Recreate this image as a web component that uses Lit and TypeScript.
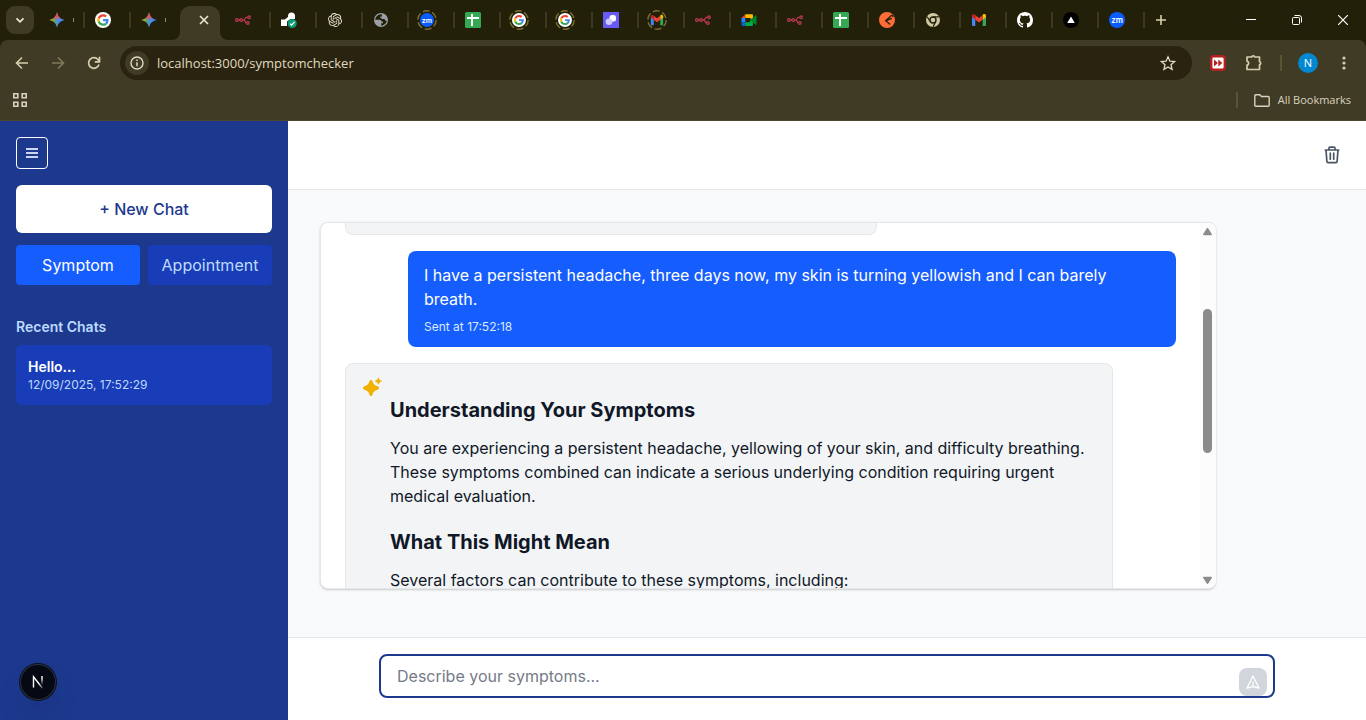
import { LitElement, html, css, svg, nothing } from "lit";
import type { SVGTemplateResult } from "lit";
import { customElement, property } from "lit/decorators.js";
import { classMap } from "lit/directives/class-map.js";

/* Tab favicons, all on a 16x16 grid. */
const favicons: Record<string, SVGTemplateResult> = {
  gemini: svg`
    <defs>
      <linearGradient id="gm" x1="0" y1="0" x2="1" y2="0">
        <stop offset="0" stop-color="#f2b500"/><stop offset=".35" stop-color="#5aa860"/>
        <stop offset=".55" stop-color="#4a8cf0"/><stop offset="1" stop-color="#3b86f8"/>
      </linearGradient>
      <linearGradient id="gt" x1="0" y1="0" x2="0" y2="1">
        <stop offset="0" stop-color="#ea4335"/><stop offset=".28" stop-color="#e4505a"/><stop offset=".5" stop-color="#e4505a" stop-opacity="0"/>
      </linearGradient>
    </defs>
    <path fill="url(#gm)" d="M8 .3C9 4.700 11.300 7 15.700 8 11.300 9 9 11.300 8 15.700 7 11.300 4.700 9 .3 8 4.700 7 7 4.700 8 .3Z"/>
    <path fill="url(#gt)" d="M8 .3C9 4.700 11.300 7 15.700 8 11.300 9 9 11.300 8 15.700 7 11.300 4.700 9 .3 8 4.700 7 7 4.700 8 .3Z"/>`,
  google: svg`
    <circle cx="8" cy="8" r="8" fill="#fff"/>
    <g transform="translate(2.200 2.200) scale(.242)">
      <path fill="#EA4335" d="M24 9.500c3.540 0 6.710 1.220 9.210 3.600l6.850-6.850C35.900 2.380 30.470 0 24 0 14.620 0 6.510 5.380 2.560 13.220l7.980 6.190C12.430 13.720 17.740 9.500 24 9.500z"/>
      <path fill="#4285F4" d="M46.980 24.550c0-1.570-.15-3.090-.38-4.550H24v9.020h12.940c-.58 2.960-2.260 5.480-4.780 7.180l7.730 6c4.510-4.180 7.090-10.360 7.090-17.650z"/>
      <path fill="#FBBC05" d="M10.530 28.590c-.48-1.450-.76-2.990-.76-4.590s.27-3.140.76-4.590l-7.980-6.190C.92 16.460 0 20.120 0 24c0 3.880.92 7.540 2.560 10.780l7.970-6.190z"/>
      <path fill="#34A853" d="M24 48c6.480 0 11.930-2.130 15.890-5.810l-7.730-6c-2.150 1.450-4.920 2.300-8.160 2.300-6.260 0-11.570-4.220-13.470-9.910l-7.980 6.190C6.510 42.620 14.620 48 24 48z"/>
    </g>`,
  nodes: svg`
    <g fill="none" stroke="#b8374f" stroke-width="1.300">
      <circle cx="1.900" cy="8" r="1.300"/><circle cx="6.200" cy="8" r="1.300"/>
      <circle cx="14" cy="5.300" r="1.300"/><circle cx="12.800" cy="11" r="1.300"/>
      <path d="M3.200 8h1.700M7.500 8h1.200c1.800 0 .8-2.700 2.600-2.700h1.400M8.700 8c1.800 0 1 3 2.800 3"/>
    </g>`,
  deploy: svg`
    <path fill="#fff" d="M7 4a3.500 3.500 0 0 1 7 0v3H9.500L6 9.500V14H0V7.500h3.800L7 5z"/>
    <circle cx="11.200" cy="11.500" r="4.500" fill="#0f9d77"/>
    <path d="m9 11.600 1.600 1.600 2.900-3.300" fill="none" stroke="#fff" stroke-width="1.200"/>`,
  openai: svg`
    <path transform="translate(1 1) scale(.584)" fill="#e8e3d4" d="M22.2819 9.8211a5.9847 5.9847 0 0 0-.5157-4.9108 6.0462 6.0462 0 0 0-6.5098-2.9A6.0651 6.0651 0 0 0 4.9807 4.1818a5.9847 5.9847 0 0 0-3.9977 2.9 6.0462 6.0462 0 0 0 .7427 7.0966 5.98 5.98 0 0 0 .511 4.9107 6.051 6.051 0 0 0 6.5146 2.9001A5.9847 5.9847 0 0 0 13.2599 24a6.0557 6.0557 0 0 0 5.7718-4.2058 5.9894 5.9894 0 0 0 3.9977-2.9001 6.0557 6.0557 0 0 0-.7475-7.0729zm-9.022 12.6081a4.4755 4.4755 0 0 1-2.8764-1.0408l.1419-.0804 4.7783-2.7582a.7948.7948 0 0 0 .3927-.6813v-6.7369l2.02 1.1686a.071.071 0 0 1 .038.052v5.5826a4.504 4.504 0 0 1-4.4945 4.4944zm-9.6607-4.1254a4.4708 4.4708 0 0 1-.5346-3.0137l.142.0852 4.783 2.7582a.7712.7712 0 0 0 .7806 0l5.8428-3.3685v2.3324a.0804.0804 0 0 1-.0332.0615L9.74 19.9502a4.4992 4.4992 0 0 1-6.1408-1.6464zM2.3408 7.8956a4.485 4.485 0 0 1 2.3655-1.9728V11.6a.7664.7664 0 0 0 .3879.6765l5.8144 3.3543-2.0201 1.1685a.0757.0757 0 0 1-.071 0l-4.8303-2.7865A4.504 4.504 0 0 1 2.3408 7.872zm16.5963 3.8558L13.1038 8.364 15.1192 7.2a.0757.0757 0 0 1 .071 0l4.8303 2.7913a4.4944 4.4944 0 0 1-.6765 8.1042v-5.6772a.79.79 0 0 0-.407-.667zm2.0107-3.0231l-.142-.0852-4.7735-2.7818a.7759.7759 0 0 0-.7854 0L9.409 9.2297V6.8974a.0662.0662 0 0 1 .0284-.0615l4.8303-2.7866a4.4992 4.4992 0 0 1 6.6802 4.66zM8.3065 12.863l-2.02-1.1638a.0804.0804 0 0 1-.038-.0567V6.0742a4.4992 4.4992 0 0 1 7.3757-3.4537l-.142.0805L8.704 5.459a.7948.7948 0 0 0-.3927.6813zm1.0976-2.3654l2.602-1.4998 2.6069 1.4998v2.9994l-2.5974 1.4997-2.6067-1.4997Z"/>`,
  globe: svg`
    <circle cx="8" cy="8" r="7" fill="#9aa0a6"/>
    <path fill="#23200a" d="M8.600 2.200C6.500 2 4.200 3 3 5.200 2.500 6.100 2.200 7 2.200 7.800h4.500c1 0 1.700.7 1.700 1.700h1.500v1.700H8.200v2.500c2.700 0 5.100-1.900 5.600-4.600l-1.600-.5-.6-1.700H9.200L7.300 5.800v-1.300h1.800z"/>`,
  zoom: svg`
    <circle cx="8" cy="8" r="8" fill="#0b5cff"/>
    <text x="8" y="11" text-anchor="middle" font-family="Inter, sans-serif" font-weight="600" font-size="8" fill="#fff">zm</text>`,
  sheet: svg`
    <rect width="16" height="16" rx="1.500" fill="#34a853"/>
    <path d="M7 2v12M2 6h12" stroke="#fff" stroke-width="2"/>`,
  shapes: svg`
    <rect width="16" height="16" fill="#665cf5"/>
    <rect x="6.500" y="3" width="6.500" height="6.500" rx="2.500" fill="#fff"/>
    <circle cx="6" cy="9.700" r="3.300" fill="#cfcbff"/>`,
  gmail: svg`
    <path fill="#4285f4" d="M1 3.500V13a1 1 0 0 0 1 1h2.300V6.500z"/>
    <path fill="#34a853" d="M15 3.500V13a1 1 0 0 1-1 1h-2.300V6.500z"/>
    <path fill="#fbbc04" d="M11.700 3.200v4.600L15 5.200V3.700c0-1.600-1.700-2.300-2.900-1.400z"/>
    <path fill="#c5221f" d="M1 3.700v1.500l3.300 2.600V3.200l-.4-.4C2.700 1.900 1 2.200 1 3.700z"/>
    <path fill="#ea4335" d="M4.300 7.800V3.200L8 6l3.700-2.800v4.600L8 10.600z"/>`,
  meet: svg`
    <path fill="#2684fc" d="M.5 6h3.800v4.200L.5 10.200z"/>
    <path fill="#ea4335" d="M.5 6 4.300 2.200V6z"/>
    <path fill="#0066da" d="M.5 10.200h3.800V14H1.800A1.300 1.300 0 0 1 .5 12.700z"/>
    <path fill="#ffba00" d="M4.300 2.200h6.400c.8 0 1.300.5 1.300 1.300V8L9 6H4.300z"/>
    <path fill="#00ac47" d="M4.300 10.200H9V8l3-2v6.700c0 .8-.5 1.300-1.300 1.300H4.300z"/>
    <path fill="#00832d" d="m9 8 3-2.500 2.600-2.100c.4-.3.900 0 .9.400v8.600c0 .4-.5.700-.9.400L12 10.600z"/>`,
  postman: svg`
    <circle cx="8" cy="8" r="8" fill="#ff6c37"/>
    <path d="M13 3 6.600 8.800l4.600 3.700M6.600 8.800l6.200-2.500M13 3l1.500 1.800" fill="none" stroke="#23200a" stroke-width="1.300"/>`,
  chrome: svg`
    <circle cx="8" cy="8" r="7" fill="#d0c9a4"/>
    <circle cx="8" cy="8" r="3" fill="none" stroke="#23200a" stroke-width="1.400"/>
    <path d="M8 4.800h6M5.100 9.500 2.200 4.700M10.900 9.500 8 14.800" stroke="#23200a" stroke-width="1.200"/>`,
  github: svg`
    <path fill="#fff" d="M8 0C3.580 0 0 3.580 0 8c0 3.540 2.290 6.530 5.470 7.590.4.070.55-.17.550-.38 0-.19-.01-.82-.01-1.490-2.010.37-2.530-.49-2.690-.94-.09-.23-.48-.94-.82-1.130-.28-.15-.68-.52-.01-.53.63-.01 1.080.58 1.230.82.72 1.210 1.870.87 2.330.66.07-.52.28-.87.510-1.070-1.780-.2-3.640-.89-3.640-3.950 0-.87.310-1.590.82-2.150-.08-.2-.36-1.020.08-2.120 0 0 .67-.21 2.200.82.64-.18 1.320-.27 2-.27s1.360.09 2 .27c1.530-1.040 2.200-.82 2.200-.82.44 1.100.16 1.920.08 2.120.51.560.82 1.270.82 2.150 0 3.070-1.870 3.750-3.650 3.950.29.250.54.730.54 1.480 0 1.070-.01 1.930-.01 2.200 0 .21.150.46.550.38A8.010 8.010 0 0 0 16 8c0-4.420-3.580-8-8-8z"/>`,
  vercel: svg`
    <circle cx="8" cy="8" r="8" fill="#000"/>
    <path d="m8 4.500 3.800 6.400H4.200z" fill="#fff"/>`,
};

interface Tab {
  icon: string;
  title: string;
  ring?: boolean;
  clipped?: boolean;
  active?: boolean;
}

const tabs: Tab[] = [
  { icon: "gemini", title: "Gemini", clipped: true },
  { icon: "google", title: "Google" },
  { icon: "gemini", title: "Gemini", clipped: true },
  { icon: "", title: "Symptom checker", active: true },
  { icon: "nodes", title: "Workflow" },
  { icon: "deploy", title: "Deploy" },
  { icon: "openai", title: "ChatGPT" },
  { icon: "globe", title: "Site" },
  { icon: "zoom", title: "Zoom", ring: true },
  { icon: "sheet", title: "Sheets" },
  { icon: "google", title: "Google", ring: true },
  { icon: "google", title: "Google", ring: true },
  { icon: "shapes", title: "Design" },
  { icon: "gmail", title: "Gmail", ring: true },
  { icon: "nodes", title: "Workflow" },
  { icon: "meet", title: "Meet" },
  { icon: "nodes", title: "Workflow" },
  { icon: "sheet", title: "Sheets" },
  { icon: "postman", title: "Postman" },
  { icon: "chrome", title: "Chrome" },
  { icon: "gmail", title: "Gmail" },
  { icon: "github", title: "GitHub" },
  { icon: "vercel", title: "Vercel" },
  { icon: "zoom", title: "Zoom" },
];

const reset = css`
  :host, *, *::before, *::after { box-sizing: border-box; }
  button, input, textarea {
    font: inherit; color: inherit; background: none; border: 0; padding: 0; margin: 0;
  }
  svg { display: block; flex: none; }
  h2, h3, p { margin: 0; }
`;

@customElement("browser-chrome")
export class BrowserChrome extends LitElement {
  static styles = [reset, css`
    :host {
      display: block; flex: none;
      font-family: "Open Sans", sans-serif; color: #d6cfae; background: #232009;
    }
    .strip { display: flex; height: 40px; align-items: center; }
    .search {
      width: 28px; height: 28px; margin: 0 4px 0 6px; border-radius: 9px;
      background: #403b24; display: grid; place-items: center;
    }
    .tab {
      width: 46px; height: 40px; flex: 0 1 46px; display: flex; align-items: center;
      padding-left: 11px; position: relative;
    }
    .tab::after {
      content: ""; position: absolute; right: -1px; top: 12px; width: 2px; height: 16px; background: #3d3820;
    }
    .tab.plain::after { display: none; }
    .ring { margin-left: -2px; }
    .clip { width: 1px; height: 4px; margin-left: 8px; background: #8d8867; }
    .active {
      flex: 0 0 48px; display: flex; height: 40px; align-items: flex-end; justify-content: center; color: #403b24;
    }
    .flare { width: 8px; height: 8px; }
    .flare.left { margin-left: -8px; }
    .flare.right { margin-right: -8px; }
    .shape {
      width: 40px; height: 34px; border-radius: 10px 10px 0 0; background: #403b24; color: #eee8cf;
      display: flex; align-items: center; justify-content: center; padding: 0 0 6px 8px;
    }
    .plus { width: 34px; height: 28px; display: grid; place-items: center; }
    .window { margin-left: auto; display: flex; color: #fff; }
    .window button { width: 46px; height: 40px; display: grid; place-items: center; }
    .toolbar {
      display: flex; align-items: center; height: 46px; padding: 0 4px;
      background: #403b24; border-radius: 8px 8px 0 0;
    }
    .tool { width: 36px; height: 34px; flex: none; display: grid; place-items: center; }
    .dim { color: #807a5c; }
    .omni {
      flex: 1; height: 34px; margin: 0 8px; border-radius: 17px; background: #29230f;
      display: flex; align-items: center; padding: 0 12px 0 5px; color: #e0dac0;
    }
    .info { width: 24px; height: 24px; border-radius: 12px; background: #403b24; display: grid; place-items: center; }
    .url { flex: 1; margin-left: 8px; font-size: 13px; line-height: 20px; outline: none; min-width: 0; }
    .rule { width: 2px; height: 16px; background: #5a5432; flex: none; }
    .toolbar .rule { margin: 0 8px; }
    .avatar {
      width: 20px; height: 20px; border-radius: 10px; background: #0288d1; color: #fff;
      font-size: 11px; line-height: 20px; text-align: center; display: block;
    }
    .bookmarks {
      display: flex; align-items: center; height: 35px; padding: 0 15px 6px 12px; background: #403b24;
      border-bottom: 1px solid #4c462f; color: #d9d2c0;
    }
    .all { margin-left: 16px; display: flex; align-items: center; gap: 8px; font-size: 11px; line-height: 16px; }
    .bookmarks .rule { margin-left: auto; }
  `];

  private favicon(tab: Tab) {
    if (tab.ring) {
      return html`<svg class="ring" width="20" height="20" viewBox="0 0 20 20">
        <circle cx="10" cy="10" r="9.200" fill="none" stroke="#7a6f32" stroke-width="1.400" stroke-dasharray="7 2.700"/>
        <g transform="translate(3 3) scale(.875)">${favicons[tab.icon]}</g>
      </svg>`;
    }
    return html`<svg width="16" height="16" viewBox="0 0 16 16">${favicons[tab.icon]}</svg>`;
  }

  private tab(tab: Tab, i: number) {
    if (tab.active) {
      return html`<div class="active">
        <svg class="flare left" viewBox="0 0 8 8"><path d="M8 0v8H0a8 8 0 0 0 8-8z" fill="currentColor"/></svg>
        <button class="shape" aria-label="Close tab">
          <svg width="10" height="10" viewBox="0 0 10 10"><path d="m1 1 8 8M9 1 1 9" stroke="currentColor" stroke-width="1.600"/></svg>
        </button>
        <svg class="flare right" viewBox="0 0 8 8"><path d="M0 0v8h8a8 8 0 0 1-8-8z" fill="currentColor"/></svg>
      </div>`;
    }
    return html`<button class=${classMap({ tab: true, plain: !!tabs[i + 1]?.active })} aria-label=${tab.title}>
      ${this.favicon(tab)}${tab.clipped ? html`<span class="clip"></span>` : nothing}
    </button>`;
  }

  render() {
    return html`
      <div class="strip">
        <button class="search" aria-label="Search tabs">
          <svg width="10" height="10" viewBox="0 0 10 10"><path d="m1.500 3.300 3.500 3.500 3.500-3.500" fill="none" stroke="#eee8cf" stroke-width="1.700"/></svg>
        </button>
        ${tabs.map((t, i) => this.tab(t, i))}
        <button class="plus" aria-label="New tab">
          <svg width="12" height="12" viewBox="0 0 12 12"><path d="M6 1v10M1 6h10" stroke="#d6cfae" stroke-width="1.600"/></svg>
        </button>
        <div class="window">
          <button aria-label="Minimize"><svg width="10" height="10" viewBox="0 0 10 10"><path d="M0 4.500h10" stroke="currentColor"/></svg></button>
          <button aria-label="Restore"><svg width="10" height="10" viewBox="0 0 10 10" fill="none" stroke="currentColor"><rect x=".5" y="2.500" width="7" height="7" rx="1"/><path d="M2.500.5H7A2.500 2.500 0 0 1 9.500 3v4.500"/></svg></button>
          <button aria-label="Close"><svg width="10" height="10" viewBox="0 0 10 10"><path d="m0 0 10 10M10 0 0 10" stroke="currentColor" stroke-width="1.200"/></svg></button>
        </div>
      </div>
      <div class="toolbar">
        <button class="tool" aria-label="Back"><svg width="14" height="14" viewBox="0 0 14 14" fill="none" stroke="currentColor" stroke-width="1.600"><path d="M13 7H2M7 1.500 1.500 7 7 12.500"/></svg></button>
        <button class="tool dim" aria-label="Forward"><svg width="14" height="14" viewBox="0 0 14 14" fill="none" stroke="currentColor" stroke-width="1.600"><path d="M1 7h11M7 1.500 12.500 7 7 12.500"/></svg></button>
        <button class="tool" aria-label="Reload"><svg width="14" height="14" viewBox="0 0 14 14" fill="none" stroke="currentColor" stroke-width="1.700"><path d="M12 8.500A5.300 5.300 0 1 1 11.300 4L12.500 5.500M12.500.8v5H7.800"/></svg></button>
        <div class="omni">
          <span class="info"><svg width="14" height="14" viewBox="0 0 14 14"><circle cx="7" cy="7" r="6" fill="none" stroke="currentColor" stroke-width="1.400"/><path d="M7 6.200v4M7 3.600v1.500" stroke="currentColor" stroke-width="1.500"/></svg></span>
          <input class="url" aria-label="Address" value="localhost:3000/symptomchecker">
          <button aria-label="Bookmark"><svg width="24" height="16" viewBox="-4 0 24 16"><path d="m8 1.800 1.900 4.400 4.700.4-3.600 3.100 1.100 4.600L8 11.900l-4.100 2.400L5 9.700 1.400 6.600l4.700-.4z" fill="none" stroke="currentColor" stroke-width="1.300"/></svg></button>
        </div>
        <button class="tool" aria-label="Extension">
          <svg width="16" height="16" viewBox="0 0 16 16"><rect x="1.200" y="1.200" width="13.600" height="13.600" rx="2.500" fill="#fff" stroke="#b3201f" stroke-width="2.400"/><path d="M4 4.500 8 8l-4 3.500zM8.300 4.500l4 3.500-4 3.500z" fill="#b3201f"/></svg>
        </button>
        <button class="tool" aria-label="Extensions">
          <svg width="18" height="18" viewBox="0 0 18 18"><path d="M2 3h4.700a1.600 1.600 0 0 1 3.100 0h4.700v4.700a1.600 1.600 0 0 1 0 3.100v4.700H2v-4.300a2.100 2.100 0 0 0 0-4.100z" fill="none" stroke="currentColor" stroke-width="1.700" stroke-linejoin="round"/></svg>
        </button>
        <span class="rule"></span>
        <button class="tool" aria-label="Profile"><span class="avatar">N</span></button>
        <button class="tool" aria-label="Menu"><svg width="4" height="14" viewBox="0 0 4 14" fill="currentColor"><circle cx="2" cy="2" r="1.600"/><circle cx="2" cy="7" r="1.600"/><circle cx="2" cy="12" r="1.600"/></svg></button>
      </div>
      <div class="bookmarks">
        <button aria-label="Tab groups"><svg width="16" height="16" viewBox="0 0 16 16" fill="none" stroke="currentColor" stroke-width="1.600"><path d="M1.800 1.800h4v4h-4zM10.200 1.800h4v4h-4zM1.800 10.200h4v4h-4zM10.200 10.200h4v4h-4z"/></svg></button>
        <span class="rule"></span>
        <button class="all">
          <svg width="16" height="13" viewBox="0 0 16 13"><path d="M.8 1.800c0-.6.400-1 1-1h4l1.700 1.700h6.700c.6 0 1 .4 1 1v7.700c0 .6-.4 1-1 1H1.800c-.6 0-1-.4-1-1z" fill="none" stroke="currentColor" stroke-width="1.400"/></svg>
          All Bookmarks
        </button>
      </div>`;
  }
}

@customElement("chat-sidebar")
export class ChatSidebar extends LitElement {
  static styles = [reset, css`
    :host {
      display: flex; flex-direction: column; flex: none; width: 288px; padding: 16px;
      background: #1c398e; color: #fff; position: relative;
    }
    button { cursor: pointer; }
    .toggle {
      width: 32px; height: 32px; border: 1px solid #fff; border-radius: 4px;
      display: grid; place-items: center; color: #cad5ee;
    }
    .new {
      margin-top: 16px; height: 48px; border-radius: 6px; background: #fff; color: #1c398e;
      font-size: 16px; line-height: 24px; font-weight: 500;
    }
    .modes { display: grid; grid-template-columns: 1fr 1fr; gap: 8px; margin-top: 12px; }
    .mode { height: 40px; border-radius: 4px; background: #193cb8; color: #bedbff; font-size: 16px; line-height: 24px; }
    .mode.on { background: #155dfc; color: #fff; }
    .label { margin-top: 32px; font-size: 14px; line-height: 20px; font-weight: 600; color: #bedbff; }
    .chat { margin-top: 8px; padding: 12px; border-radius: 6px; background: #193cb8; text-align: left; }
    .name { display: block; font-size: 14px; line-height: 20px; font-weight: 600; }
    .date { display: block; font-size: 12px; line-height: 16px; color: #bedbff; }
    .dev {
      position: absolute; left: 20px; bottom: 20px; width: 36px; height: 36px; border-radius: 18px;
      background: #050914; display: grid; place-items: center;
      box-shadow: inset 0 0 0 1px #2d323d, 0 0 0 1px #0b1022, 0 16px 32px -8px rgba(0, 0, 0, 0.24);
    }
  `];

  @property() name = "Hello...";
  @property() date = "12/09/2025, 17:52:29";

  render() {
    return html`
      <button class="toggle" aria-label="Toggle sidebar">
        <svg width="12" height="12" viewBox="0 0 12 12"><path d="M0 2h12M0 6h12M0 10h12" stroke="currentColor" stroke-width="2"/></svg>
      </button>
      <button class="new">+ New Chat</button>
      <div class="modes">
        <button class="mode on">Symptom</button>
        <button class="mode">Appointment</button>
      </div>
      <h2 class="label">Recent Chats</h2>
      <button class="chat"><span class="name">${this.name}</span><span class="date">${this.date}</span></button>
      <button class="dev" aria-label="Developer tools">
        <svg width="14" height="16" viewBox="0 0 14 16" fill="none" stroke-width="1.400">
          <defs>
            <linearGradient id="d" x1="0" y1="0" x2="1" y2="1"><stop offset=".6" stop-color="#fff"/><stop offset="1" stop-color="#fff" stop-opacity=".2"/></linearGradient>
            <linearGradient id="v" gradientUnits="userSpaceOnUse" x1="0" y1="2" x2="0" y2="11"><stop offset=".3" stop-color="#fff"/><stop offset="1" stop-color="#fff" stop-opacity="0"/></linearGradient>
          </defs>
          <path d="M2.500 13.500V2.800l9 11.400" stroke="url(#d)"/><path d="M11 2v9" stroke="url(#v)"/>
        </svg>
      </button>`;
  }
}

@customElement("chat-panel")
export class ChatPanel extends LitElement {
  static styles = [reset, css`
    :host { display: flex; flex-direction: column; flex: 1; min-width: 0; background: #f9fafb; color: #101828; }
    .header {
      flex: none; display: flex; align-items: center; justify-content: flex-end; height: 69px;
      padding: 0 24px; background: #fff; border-bottom: 1px solid #e5e7eb; color: #4a5565;
    }
    .body { flex: 1; min-height: 0; padding: 32px 32px 48px; display: flex; }
    .box {
      flex: 1; max-width: 896px; display: flex; overflow: hidden; background: #fff;
      border: 1px solid #e5e7eb; border-right: 0; border-radius: 8px;
      box-shadow: 0 1px 3px rgba(0, 0, 0, 0.1), 0 1px 2px rgba(0, 0, 0, 0.1);
    }
    .list { flex: 1; min-width: 0; padding: 0 24px; display: flex; flex-direction: column; gap: 16px; overflow: hidden; }
    .list > * { flex: none; }
    .previous {
      width: 532px; max-width: 100%; height: 12px; border: 1px solid #e5e7eb; border-top: 0;
      border-radius: 0 0 8px 8px; background: #f3f4f6;
    }
    .user {
      width: 768px; max-width: 100%; align-self: flex-end; padding: 12px 16px; border-radius: 8px; background: #155dfc;
      color: #fff; font-size: 16px; line-height: 24px;
    }
    .sent { margin-top: 8px; font-size: 12px; line-height: 16px; color: #dbeafe; }
    .reply {
      width: 768px; max-width: 100%; display: flex; gap: 8px; padding: 12px 16px;
      border: 1px solid #e5e7eb; border-radius: 8px; background: #f3f4f6;
    }
    .text { flex: 1; font-size: 16px; line-height: 24px; }
    .text h3 { margin: 20px 0 12px; font-size: 20px; line-height: 28px; font-weight: 700; }
    .bar {
      flex: none; width: 16px; background: #fcfcfc; display: flex; flex-direction: column; align-items: center;
      justify-content: space-between; padding: 4px 1px 3px 0; color: #8b8b8b;
    }
    .track { flex: 1; display: flex; flex-direction: column; }
    .before { flex: 73; }
    .thumb { flex: 144; width: 9px; border-radius: 5px; background: #8b8b8b; }
    .after { flex: 123; }
    .footer { flex: none; height: 83px; padding: 16px 32px; background: #fff; border-top: 1px solid #e5e7eb; }
    .compose { position: relative; max-width: 896px; margin: 0 auto; }
    .field {
      display: block; width: 100%; height: 44px; padding: 8px 48px 8px 16px; border: 2px solid #1c398e; border-radius: 8px;
      background: #fff; font-size: 16px; line-height: 24px; resize: none; outline: none; overflow: hidden;
    }
    .field::placeholder { color: #757b87; opacity: 1; }
    .send {
      position: absolute; right: 8px; bottom: 2px; width: 28px; height: 28px; border-radius: 8px;
      background: #d1d5dc; color: #fff; display: grid; place-items: center;
    }
  `];

  render() {
    return html`
      <div class="header">
        <button aria-label="Delete chat">
          <svg width="20" height="20" viewBox="0 0 20 20" fill="none" stroke="currentColor" stroke-width="1.700" stroke-linecap="round" stroke-linejoin="round">
            <path d="M3.300 5h13.400M4 5l.9 11.600c.1.600.5 1 1.100 1h8c.6 0 1-.4 1.100-1L16 5M7 5V3.200c0-.6.500-1 1-1h4c.6 0 1 .4 1 1V5M8.300 8.200v6M11.700 8.200v6"/>
          </svg>
        </button>
      </div>
      <div class="body">
        <div class="box">
          <div class="list">
            <div class="previous"></div>
            <div class="user">
              <p>I have a persistent headache, three days now, my skin is turning yellowish and I can barely breath.</p>
              <p class="sent">Sent at 17:52:18</p>
            </div>
            <div class="reply">
              <svg width="20" height="20" viewBox="0 0 20 20" fill="#f0b100">
                <path d="M9 4c.8 0 1.200.4 1.500 1.300.7 2.500 1.500 3.500 5 4.900 1 .4 1.500.9 1.500 1.800s-.5 1.400-1.500 1.700c-3.300 1.200-4.300 2.200-5 5C10.200 19.600 9.800 20 9 20s-1.200-.4-1.500-1.300c-.7-2.800-1.700-3.800-5-5C1.500 13.400 1 12.900 1 12s.5-1.400 1.500-1.800c3.500-1.400 4.300-2.400 5-4.900C7.800 4.400 8.200 4 9 4z"/>
                <path d="M16.700 1.800c.5 1.800 1 2.300 2.900 2.900.3.100.3.600 0 .7-1.900.6-2.400 1.200-2.900 2.900-.1.400-.6.400-.7 0-.5-1.700-1.100-2.300-2.800-2.900-.4-.1-.4-.6 0-.7 1.700-.6 2.300-1.100 2.800-2.900.1-.3.600-.3.700 0z"/>
              </svg>
              <div class="text">
                <h3>Understanding Your Symptoms</h3>
                <p>You are experiencing a persistent headache, yellowing of your skin, and difficulty breathing. These symptoms combined can indicate a serious underlying condition requiring urgent medical evaluation.</p>
                <h3>What This Might Mean</h3>
                <p>Several factors can contribute to these symptoms, including:</p>
              </div>
            </div>
          </div>
          <div class="bar">
            <svg width="9" height="9" viewBox="0 0 9 9" fill="currentColor"><path d="M3.700 1.500c.4-.6 1.200-.6 1.600 0L8.800 7c.4.600.1 1.200-.6 1.200H.8C.1 8.200-.2 7.600.2 7z"/></svg>
            <div class="track"><span class="before"></span><span class="thumb"></span><span class="after"></span></div>
            <svg width="9" height="9" viewBox="0 0 9 9" fill="currentColor"><path d="M3.700 7.500c.4.600 1.200.6 1.600 0L8.800 2c.4-.6.1-1.200-.6-1.200H.8C.1.8-.2 1.400.2 2z"/></svg>
          </div>
        </div>
      </div>
      <div class="footer">
        <div class="compose">
          <textarea class="field" rows="1" aria-label="Describe your symptoms" placeholder="Describe your symptoms..."></textarea>
          <button class="send" aria-label="Send">
            <svg width="16" height="16" viewBox="0 0 16 16" fill="none" stroke="currentColor" stroke-width="1.300" stroke-linejoin="round"><path d="m8 2 6 12-6-1.300L2 14zM8 7.500v5.200"/></svg>
          </button>
        </div>
      </div>`;
  }
}

@customElement("app-root")
export class AppRoot extends LitElement {
  static styles = css`
    :host {
      display: flex; flex-direction: column; height: 100vh; overflow: hidden;
      font-family: Inter, "Liberation Sans", sans-serif;
    }
    .page { flex: 1; min-height: 0; display: flex; }
  `;

  render() {
    return html`
      <browser-chrome></browser-chrome>
      <div class="page">
        <chat-sidebar></chat-sidebar>
        <chat-panel></chat-panel>
      </div>`;
  }
}
